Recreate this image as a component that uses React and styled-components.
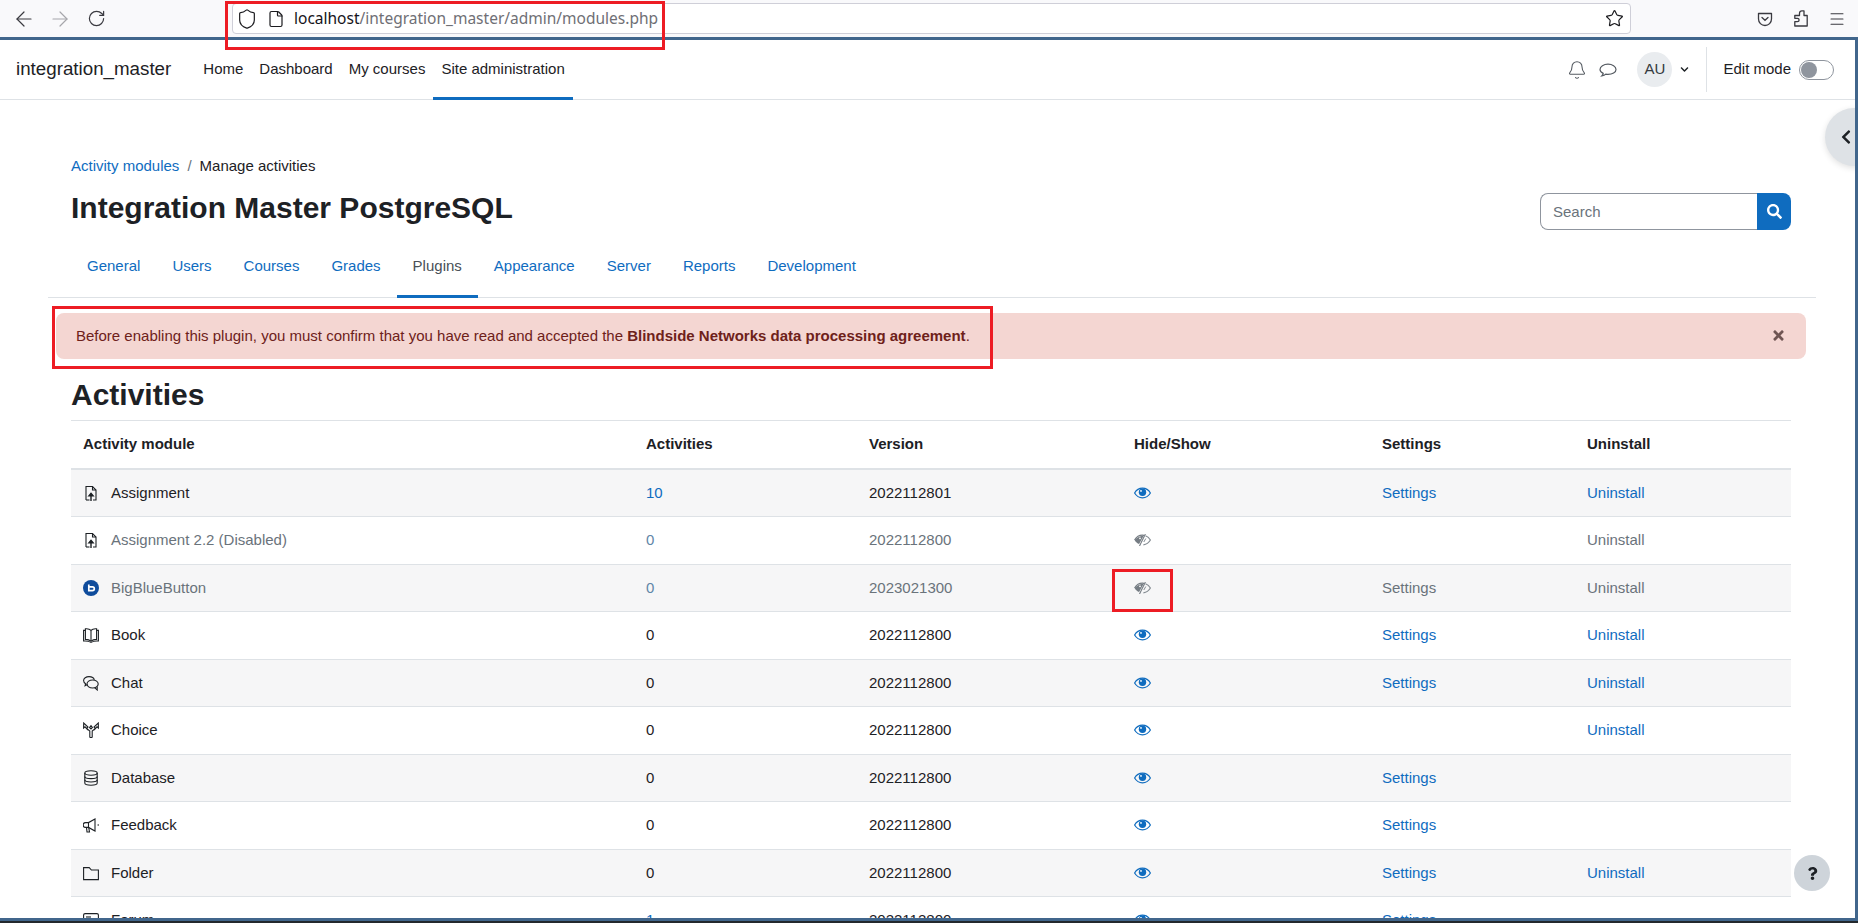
import React from 'react'
import styled, { createGlobalStyle } from 'styled-components'
import { ArrowLeft, ArrowRight, RotateCw, Shield, File, Star, Menu, Bell } from 'lucide-react'
import { FaSearch, FaChevronDown, FaChevronLeft, FaQuestion, FaTimes } from 'react-icons/fa'

const GlobalStyle = createGlobalStyle`
    html, body {
        margin: 0;
        height: 100%;
        overflow: hidden;
        background: #fff;
    }
    * {
        box-sizing: border-box;
    }
    body {
        font-family: "Liberation Sans", Arial, sans-serif;
        font-size: 15px;
        line-height: 22.5px;
        color: #1d2125;
    }
`

const Screen = styled.div`
    position: relative;
    display: flex;
    flex-direction: column;
    width: 1858px;
    height: 923px;
    padding-bottom: 2px;
    background: #23282d;
    overflow: hidden;
`

const BrowserBar = styled.div`
    display: flex;
    align-items: center;
    flex: 0 0 37px;
    height: 37px;
    background: #f9f9fb;
    color: #1b1b1f;
`

const ChromeButton = styled.span`
    display: flex;
    align-items: center;
    justify-content: center;
    width: 36px;
    height: 36px;
    color: ${(p) => (p.$off ? '#a6a6ab' : '#3a3a40')};
`

const BackButtons = styled.div`
    display: flex;
    margin-left: 6px;
`

const UrlBar = styled.div`
    display: flex;
    align-items: center;
    width: 1399px;
    height: 31px;
    margin-left: 118px;
    margin-right: 116px;
    padding: 0 6px 0 3px;
    background: #fff;
    border: 1px solid #cfcfd8;
    border-radius: 4px;
`

const FileIcon = styled(File)`
    margin-left: 9px;
`

const UrlText = styled.span`
    flex: 1;
    margin-left: 9px;
    font-family: "Noto Sans", sans-serif;
    font-size: 15.5px;
    color: #6f6f75;

    & b {
        font-weight: 400;
        color: #15141a;
    }
`

const Frame = styled.div`
    position: relative;
    flex: 1;
    min-height: 0;
    background: #fff;
    border-top: 3px solid #41668c;
    border-right: 3px solid #41668c;
    border-bottom: 3px solid #41668c;
    overflow: hidden;
`

const TopNav = styled.nav`
    display: flex;
    align-items: stretch;
    height: 60px;
    padding-left: 16px;
    border-bottom: 1px solid #dee2e6;
`

const Brand = styled.div`
    display: flex;
    align-items: center;
    font-size: 18.75px;
    margin-right: 24px;
`

const NavItem = styled.a`
    display: flex;
    align-items: center;
    padding: 2px 8px 0;
    margin-bottom: -1px;
    border-bottom: 3px solid ${(p) => (p.$active ? '#0f6cbf' : 'transparent')};
    color: #1d2125;
`

const NavRight = styled.div`
    display: flex;
    align-items: center;
    margin-left: auto;
    padding-right: 21px;
`

const NavIcon = styled.span`
    display: flex;
    margin-right: 12px;
    color: #555b62;
`

const Avatar = styled.span`
    display: flex;
    align-items: center;
    justify-content: center;
    width: 35px;
    height: 35px;
    margin-left: 8px;
    border-radius: 50%;
    background: #e9ecef;
    color: #343a40;
`

const CaretBox = styled.span`
    display: flex;
    margin: 0 17px 0 8px;
`

const EditMode = styled.div`
    display: flex;
    align-items: center;
    height: 45px;
    padding-left: 16px;
    border-left: 1px solid #dee2e6;
    gap: 8px;
`

const Toggle = styled.span`
    display: block;
    width: 35px;
    height: 20px;
    padding: 1px;
    border: 1px solid #8f959e;
    border-radius: 10px;
    background: #fff;

    &::before {
        content: '';
        display: block;
        width: 16px;
        height: 16px;
        border-radius: 50%;
        background: #8f959e;
    }
`

const Main = styled.main`
    padding: 55px 64px 0 71px;
`

const Crumbs = styled.div`
    display: flex;
    gap: 8px;
`

const Link = styled.a`
    color: ${(p) => (p.$dim ? '#5f87a8' : '#0f6cbf')};
    text-decoration: none;
`

const CrumbSlash = styled.span`
    color: #6a737b;
`

const HeaderRow = styled.div`
    display: flex;
    align-items: flex-start;
    justify-content: space-between;
    margin-top: 12px;
`

const Title = styled.h1`
    margin: 0;
    font-size: 30px;
    line-height: 36px;
    font-weight: 700;
`

const SearchBox = styled.div`
    display: flex;
    width: 251px;
    height: 37px;
    margin-top: 3px;
`

const SearchField = styled.div`
    flex: 1;
    padding: 7px 12px;
    border: 1px solid #8f959e;
    border-right: 0;
    border-radius: 8px 0 0 8px;
    color: #6a737b;
`

const SearchButton = styled.span`
    display: flex;
    align-items: center;
    justify-content: center;
    width: 34px;
    background: #0f6cbf;
    color: #fff;
    border-radius: 0 8px 8px 0;
`

const Tabs = styled.div`
    display: flex;
    height: 62px;
    margin: 6px -25px 0 -23px;
    padding-left: 23px;
    border-bottom: 1px solid #dee2e6;
`

const Tab = styled.a`
    display: flex;
    align-items: center;
    margin-bottom: -1px;
    padding: 2px 16px 0;
    border-bottom: 3px solid ${(p) => (p.$active ? '#0f6cbf' : 'transparent')};
    color: ${(p) => (p.$active ? '#495057' : '#0f6cbf')};
`

const Alert = styled.div`
    display: flex;
    align-items: center;
    justify-content: space-between;
    margin: 15px -15px 0;
    padding: 12px 20px;
    border-radius: 8px;
    background: #f4d6d2;
    color: #6e211a;
`

const AlertClose = styled.span`
    display: flex;
    color: #6f5553;
`

const SectionTitle = styled.h2`
    margin: 18px 0 0;
    font-size: 30px;
    line-height: 36px;
    font-weight: 700;
`

const Table = styled.table`
    width: 1720px;
    margin-top: 7px;
    border-collapse: collapse;
    table-layout: fixed;
`

const Col = styled.col`
    width: ${(p) => p.$w}px;
`

const HeadCell = styled.th`
    padding: 12px;
    text-align: left;
    font-weight: 700;
    border-top: 1px solid #dee2e6;
    border-bottom: 2px solid #dee2e6;
`

const Row = styled.tr`
    background: ${(p) => (p.$odd ? '#f6f6f7' : '#fff')};
    color: ${(p) => (p.$dim ? '#6a737b' : '#1d2125')};
`

const Cell = styled.td`
    height: 47.5px;
    padding: 12px;
    border-bottom: 1px solid #dee2e6;
`

const ModuleName = styled.span`
    display: flex;
    align-items: center;
    gap: 12px;
`

const ModuleSvg = styled.svg`
    flex: 0 0 16px;
    width: 16px;
    height: 16px;
    fill: none;
    stroke: #1d2125;
    stroke-width: 1.1;
`

const EyeBox = styled.span`
    display: flex;
`

const SideToggle = styled.span`
    position: absolute;
    top: 68px;
    right: -28px;
    display: flex;
    align-items: center;
    padding-left: 13px;
    width: 58px;
    height: 58px;
    border-radius: 50%;
    background: #dee2e6;
    box-shadow: 0 2px 6px rgba(0, 0, 0, 0.12);
    color: #1d2125;
`

const HelpButton = styled.span`
    position: absolute;
    right: 25px;
    bottom: 27px;
    display: flex;
    align-items: center;
    justify-content: center;
    width: 36px;
    height: 36px;
    border-radius: 50%;
    background: #ced4da;
    color: #1d2125;
`

const Mark = styled.div`
    position: absolute;
    left: ${(p) => p.$x}px;
    top: ${(p) => p.$y}px;
    width: ${(p) => p.$w}px;
    height: ${(p) => p.$h}px;
    border: 3px solid #ed1c24;
`

const Icon = ({ children }) => <ModuleSvg viewBox="0 0 16 16">{children}</ModuleSvg>

const moduleIcons = {
    assign: (
        <Icon>
            <path d="M3 15V1.500h6.500L13 5v10h-3" />
            <path d="M9.500 1.500V5H13" />
            <path d="M3 15h3.500" />
            <path d="M8 16V9" strokeWidth="1.400" />
            <path d="M5.600 11 8 8.200 10.400 11z" fill="#1d2125" />
        </Icon>
    ),
    bbb: (
        <Icon>
            <circle cx="8" cy="8" r="8" fill="#0f4c9c" stroke="none" />
            <path d="M5.800 4.400v6.200h3.600a1.900 1.900 0 0 0 0-3.800H5.800" stroke="#fff" strokeWidth="1.700" />
        </Icon>
    ),
    book: (
        <Icon>
            <path d="M8 3.400C6.600 2 4 1.600 2.400 1.800v10.600c2 0 4.200.5 5.600 1.800 1.400-1.300 3.600-1.800 5.600-1.800V1.800C12 1.600 9.400 2 8 3.400z" />
            <path d="M8 3.400v10.800" />
            <path d="M2.400 3.400H.6v10.600c2.800-.2 5.300 0 7.400 1.400 2.100-1.400 4.600-1.600 7.400-1.400V3.400h-1.800" />
        </Icon>
    ),
    chat: (
        <Icon>
            <path d="M6 1.600C3 1.600.6 3.400.6 5.600c0 1.300.8 2.400 2 3.100l-.5 2 2.300-1.200" />
            <path d="M6 1.600c2.600 0 4.900 1.400 5.300 3.300" />
            <ellipse cx="9.600" cy="9" rx="5.600" ry="4" />
            <path d="M11.600 12.700l2.600 2.300v-3.400" />
        </Icon>
    ),
    choice: (
        <Icon>
            <path d="M6.800 15.500V9L3.600 6.500 5 5 .7 1l-.1 5 1.400-1.200L5 8" />
            <path d="M9.200 15.500V9l3.200-2.500L11 5l4.300-4 .1 5L14 4.800 11 8" />
            <path d="M6.800 15.500h2.400" />
            <path d="M6.600 5.500 8 7l1.400-1.500L8 3.600z" />
        </Icon>
    ),
    database: (
        <Icon>
            <ellipse cx="8" cy="3" rx="6.200" ry="2.200" />
            <path d="M1.800 3v10c0 1.200 2.800 2.200 6.200 2.200s6.200-1 6.200-2.200V3" />
            <path d="M1.800 6.400c0 1.200 2.800 2.200 6.200 2.200s6.200-1 6.200-2.200" />
            <path d="M1.800 9.800c0 1.200 2.800 2.200 6.200 2.200s6.200-1 6.200-2.200" />
        </Icon>
    ),
    feedback: (
        <Icon>
            <path d="M12 2 5.500 5.600H2.600a2 2 0 0 0 0 4.800h2.900L12 14z" />
            <path d="M5.500 5.600v4.800" />
            <path d="M3.500 10.400 4 15h2.500l-.8-4.600" />
            <path d="M15.200 7.300v1.400" />
        </Icon>
    ),
    folder: (
        <Icon>
            <path d="M.6 14.600V2.600h5.600l2.200 2.400h7v9.600z" />
        </Icon>
    ),
    forum: (
        <Icon>
            <rect x="0.600" y="1.600" width="14.800" height="10.500" rx="1.500" />
            <path d="M3 5h5" />
        </Icon>
    ),
}

const EyeShown = () => (
    <svg width="17" height="12" viewBox="0 0 17 12" fill="none">
        <path d="M.6 6C2.500 2.800 5.300 1.200 8.500 1.200s6 1.600 7.900 4.800c-1.900 3.200-4.700 4.800-7.900 4.800S2.500 9.200.6 6z" stroke="#0f6cbf" strokeWidth="1.200" />
        <circle cx="8.500" cy="5.300" r="3.700" fill="#0f6cbf" />
        <circle cx="7" cy="3.900" r="0.900" fill="#fff" />
    </svg>
)

const EyeSlash = () => (
    <svg width="17" height="12" viewBox="0 0 17 12" fill="none">
        <path d="M.6 6C2.500 2.800 5.300 1.200 8.500 1.200c.6 0 1.100.1 1.700.2" stroke="#757c83" strokeWidth="1.300" />
        <path d="M.6 6c1.100 2 2.700 3.400 4.500 4.100L9.700 1.800C9.300 1.700 8.900 1.700 8.500 1.700 6 2 3.500 3.500 .6 6z" fill="#757c83" />
        <circle cx="6" cy="4.300" r="0.900" fill="#fff" />
        <path d="M11.500 1.700c2 .8 3.700 2.200 4.900 4.300-1.700 2.900-4.300 4.500-7 4.800" stroke="#858c93" strokeWidth="1.200" />
        <path d="M11.400 0 5.500 12" stroke="#757c83" strokeWidth="1.100" />
        <path d="M11.800 4.500 9.800 8" stroke="#858c93" strokeWidth="1" />
    </svg>
)

const PocketIcon = () => (
    <svg width="16" height="16" viewBox="0 0 16 16" fill="none" stroke="#3a3a40" strokeWidth="1.300">
        <path d="M1.500 2.500h13V8A6.500 6.500 0 0 1 1.500 8z" strokeLinejoin="round" />
        <path d="M5 6.500 8 9.300l3-2.800" strokeLinecap="round" />
    </svg>
)

const ExtensionIcon = () => (
    <svg width="16" height="17" viewBox="0 0 16 17" fill="none" stroke="#3a3a40" strokeWidth="1.300" strokeLinejoin="round">
        <path d="M1.800 5.500h4.700V3.200a2.300 2.300 0 0 1 2.300-2.300h2.200v4.600h3.200v10.500H1.800v-4.300h2.600a1.700 1.700 0 0 0 0-3.400H1.800z" />
    </svg>
)

const CommentIcon = () => (
    <svg width="18" height="16" viewBox="0 0 18 16" fill="none" stroke="#555b62" strokeWidth="1.200">
        <path d="M9 2.200c4.300 0 8 2.200 8 5.200s-3.700 5-8 5c-.8 0-1.500-.1-2.200-.2-.9.900-2.400 1.500-4 1.700.8-.8 1.300-1.600 1.400-2.500C2.300 10.400 1 9 1 7.400c0-3 3.700-5.200 8-5.200z" />
    </svg>
)

const tabs = ['General', 'Users', 'Courses', 'Grades', 'Plugins', 'Appearance', 'Server', 'Reports', 'Development']
const colWidths = [563, 223, 265, 248, 205, 216]

const rows = [
    { icon: 'assign', name: 'Assignment', count: '10', linked: true, version: '2022112801', settings: true, uninstall: true },
    { icon: 'assign', name: 'Assignment 2.2 (Disabled)', count: '0', linked: true, version: '2022112800', dim: true, uninstall: true },
    { icon: 'bbb', name: 'BigBlueButton', count: '0', linked: true, version: '2023021300', dim: true, settings: true, uninstall: true },
    { icon: 'book', name: 'Book', count: '0', version: '2022112800', settings: true, uninstall: true },
    { icon: 'chat', name: 'Chat', count: '0', version: '2022112800', settings: true, uninstall: true },
    { icon: 'choice', name: 'Choice', count: '0', version: '2022112800', uninstall: true },
    { icon: 'database', name: 'Database', count: '0', version: '2022112800', settings: true },
    { icon: 'feedback', name: 'Feedback', count: '0', version: '2022112800', settings: true },
    { icon: 'folder', name: 'Folder', count: '0', version: '2022112800', settings: true, uninstall: true },
    { icon: 'forum', name: 'Forum', count: '1', linked: true, version: '2022112800', settings: true },
]

export default function App() {
    return (
        <Screen>
            <GlobalStyle />
            <BrowserBar>
                <BackButtons>
                    <ChromeButton><ArrowLeft size={24} strokeWidth={1.2} /></ChromeButton>
                    <ChromeButton $off><ArrowRight size={24} strokeWidth={1.2} /></ChromeButton>
                    <ChromeButton><RotateCw size={19} strokeWidth={1.5} /></ChromeButton>
                </BackButtons>
                <UrlBar>
                    <Shield size={22} strokeWidth={1.3} />
                    <FileIcon size={18} strokeWidth={1.6} />
                    <UrlText><b>localhost</b>/integration_master/admin/modules.php</UrlText>
                    <Star size={19} strokeWidth={1.5} />
                </UrlBar>
                <ChromeButton><PocketIcon /></ChromeButton>
                <ChromeButton><ExtensionIcon /></ChromeButton>
                <ChromeButton><Menu size={18} strokeWidth={1.4} /></ChromeButton>
            </BrowserBar>
            <Frame>
                <TopNav>
                    <Brand>integration_master</Brand>
                    <NavItem>Home</NavItem>
                    <NavItem>Dashboard</NavItem>
                    <NavItem>My courses</NavItem>
                    <NavItem $active>Site administration</NavItem>
                    <NavRight>
                        <NavIcon><Bell size={20} strokeWidth={1.3} /></NavIcon>
                        <NavIcon><CommentIcon /></NavIcon>
                        <Avatar>AU</Avatar>
                        <CaretBox><FaChevronDown size={9} /></CaretBox>
                        <EditMode>
                            Edit mode
                            <Toggle />
                        </EditMode>
                    </NavRight>
                </TopNav>
                <Main>
                    <Crumbs>
                        <Link>Activity modules</Link>
                        <CrumbSlash>/</CrumbSlash>
                        <span>Manage activities</span>
                    </Crumbs>
                    <HeaderRow>
                        <Title>Integration Master PostgreSQL</Title>
                        <SearchBox>
                            <SearchField>Search</SearchField>
                            <SearchButton><FaSearch size={15} /></SearchButton>
                        </SearchBox>
                    </HeaderRow>
                    <Tabs>
                        {tabs.map((t) => (
                            <Tab key={t} $active={t === 'Plugins'}>{t}</Tab>
                        ))}
                    </Tabs>
                    <Alert>
                        <span>
                            Before enabling this plugin, you must confirm that you have read and accepted the{' '}
                            <b>Blindside Networks data processing agreement</b>.
                        </span>
                        <AlertClose><FaTimes size={15} /></AlertClose>
                    </Alert>
                    <SectionTitle>Activities</SectionTitle>
                    <Table>
                        <colgroup>
                            {colWidths.map((w, i) => (
                                <Col key={i} $w={w} />
                            ))}
                        </colgroup>
                        <thead>
                            <tr>
                                <HeadCell>Activity module</HeadCell>
                                <HeadCell>Activities</HeadCell>
                                <HeadCell>Version</HeadCell>
                                <HeadCell>Hide/Show</HeadCell>
                                <HeadCell>Settings</HeadCell>
                                <HeadCell>Uninstall</HeadCell>
                            </tr>
                        </thead>
                        <tbody>
                            {rows.map((r, i) => (
                                <Row key={r.name} $odd={i % 2 === 0} $dim={r.dim}>
                                    <Cell>
                                        <ModuleName>
                                            {moduleIcons[r.icon]}
                                            {r.name}
                                        </ModuleName>
                                    </Cell>
                                    <Cell>{r.linked ? <Link $dim={r.dim}>{r.count}</Link> : r.count}</Cell>
                                    <Cell>{r.version}</Cell>
                                    <Cell>
                                        <EyeBox>{r.dim ? <EyeSlash /> : <EyeShown />}</EyeBox>
                                    </Cell>
                                    <Cell>{r.settings && (r.dim ? 'Settings' : <Link>Settings</Link>)}</Cell>
                                    <Cell>{r.uninstall && (r.dim ? 'Uninstall' : <Link>Uninstall</Link>)}</Cell>
                                </Row>
                            ))}
                        </tbody>
                    </Table>
                </Main>
                <SideToggle><FaChevronLeft size={16} /></SideToggle>
                <HelpButton><FaQuestion size={13} /></HelpButton>
            </Frame>
            <Mark $x={225} $y={1} $w={440} $h={49} />
            <Mark $x={52} $y={306} $w={941} $h={63} />
            <Mark $x={1112} $y={569} $w={61} $h={43} />
        </Screen>
    )
}
